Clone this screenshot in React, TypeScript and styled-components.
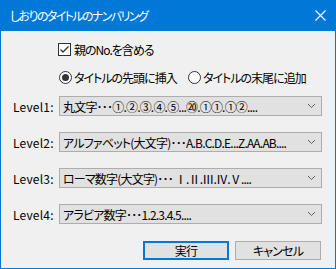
import React from "react"
import styled, { createGlobalStyle } from "styled-components"

const GlobalStyle = createGlobalStyle`
    html, body {
        margin: 0;
        padding: 0;
        background: #f0f0f0;
    }
    * {
        box-sizing: border-box;
    }
`

const Window = styled.div`
    width: 336px;
    height: 269px;
    border: 1px solid #0078d7;
    border-top: none;
    background: #f0f0f0;
    display: flex;
    flex-direction: column;
    font-family: "Noto Sans CJK JP", "Noto Sans", sans-serif;
    font-feature-settings: "palt";
    font-size: 12px;
    color: #000;
`

const TitleBar = styled.div`
    height: 31px;
    margin: 0 -1px;
    background: #0078d7;
    color: #fff;
    display: flex;
    align-items: center;
    justify-content: space-between;
    padding: 0 10px 0 10px;
    flex: 0 0 auto;
`

const TitleText = styled.div`
    font-size: 12px;
    letter-spacing: -1.6px;
    margin-top: -1px;
`

const Body = styled.div`
    flex: 1 1 auto;
    display: flex;
    flex-direction: column;
    padding: 12px 13px 0 12px;
`

const Text = styled.span`
    letter-spacing: -1px;
`

const CheckRow = styled.label`
    display: flex;
    align-items: center;
    gap: 3px;
    margin-left: 45px;
    height: 13px;
`

const CheckBox = styled.span`
    width: 13px;
    height: 13px;
    border: 1px solid #333;
    background: #fff;
    display: flex;
    align-items: center;
    justify-content: center;
`

const RadioRow = styled.div`
    display: flex;
    align-items: center;
    margin-left: 46px;
    margin-top: 15px;
    height: 13px;
`

const RadioItem = styled.label<{ $width?: number }>`
    display: flex;
    align-items: center;
    gap: 2px;
    width: ${p => (p.$width ? `${p.$width}px` : "auto")};
`

const RadioCircle = styled.span<{ $checked?: boolean }>`
    width: 13px;
    height: 13px;
    border: 1px solid #333;
    border-radius: 50%;
    background: #fff;
    display: flex;
    align-items: center;
    justify-content: center;
    &::after {
        content: "";
        width: 7px;
        height: 7px;
        border-radius: 50%;
        background: ${p => (p.$checked ? "#333" : "transparent")};
    }
`

const Levels = styled.div`
    display: flex;
    flex-direction: column;
    gap: 16px;
    margin-top: 12px;
`

const LevelRow = styled.div`
    display: flex;
    align-items: center;
    height: 20px;
`

const LevelLabel = styled.div`
    width: 46px;
    letter-spacing: 0.2px;
`

const Select = styled.div`
    flex: 1 1 auto;
    height: 20px;
    border: 1px solid #adadad;
    background: #e1e1e1;
    display: flex;
    align-items: center;
    justify-content: space-between;
    padding: 0 5px 0 3px;
    white-space: nowrap;
    overflow: hidden;
`

const SelectText = styled.span`
    letter-spacing: -0.8px;
`

const Buttons = styled.div`
    display: flex;
    justify-content: flex-end;
    gap: 6px;
    margin-top: 17px;
    margin-right: 1px;
`

const Button = styled.div<{ $primary?: boolean }>`
    width: 86px;
    height: 19px;
    background: #e1e1e1;
    border: ${p => (p.$primary ? "2px solid #0078d7" : "1px solid #adadad")};
    display: flex;
    align-items: center;
    justify-content: center;
    letter-spacing: -0.8px;
`

const Chevron = () => (
    <svg width="9" height="6" viewBox="0 0 9 6">
        <path d="M1 1 L4.5 4.5 L8 1" fill="none" stroke="#606060" strokeWidth="1" />
    </svg>
)

const levels = [
    { label: "Level1:", text: "丸文字･･･①.②.③.④.⑤...⑳.①①.①②...." },
    { label: "Level2:", text: "アルファベット(大文字)･･･A.B.C.D.E...Z.AA.AB...." },
    { label: "Level3:", text: "ローマ数字(大文字)･･･ Ⅰ.Ⅱ.Ⅲ.Ⅳ.Ⅴ...." },
    { label: "Level4:", text: "アラビア数字･･･1.2.3.4.5...." },
]

export default function App() {
    return (
        <>
            <GlobalStyle />
            <Window>
                <TitleBar>
                    <TitleText>しおりのタイトルのナンバリング</TitleText>
                    <svg width="11" height="11" viewBox="0 0 11 11">
                        <path d="M0.5 0.5 L10.5 10.5 M10.5 0.5 L0.5 10.5" stroke="#fff" strokeWidth="1.1" />
                    </svg>
                </TitleBar>
                <Body>
                    <CheckRow>
                        <CheckBox>
                            <svg width="11" height="11" viewBox="0 0 11 11">
                                <path d="M1.5 5.5 L4 8 L9.5 2.5" fill="none" stroke="#333" strokeWidth="1.3" />
                            </svg>
                        </CheckBox>
                        <Text>親のNo.を含める</Text>
                    </CheckRow>
                    <RadioRow>
                        <RadioItem $width={129}>
                            <RadioCircle $checked />
                            <Text>タイトルの先頭に挿入</Text>
                        </RadioItem>
                        <RadioItem>
                            <RadioCircle />
                            <Text>タイトルの末尾に追加</Text>
                        </RadioItem>
                    </RadioRow>
                    <Levels>
                        {levels.map(l => (
                            <LevelRow key={l.label}>
                                <LevelLabel>{l.label}</LevelLabel>
                                <Select>
                                    <SelectText>{l.text}</SelectText>
                                    <Chevron />
                                </Select>
                            </LevelRow>
                        ))}
                    </Levels>
                    <Buttons>
                        <Button $primary>実行</Button>
                        <Button>キャンセル</Button>
                    </Buttons>
                </Body>
            </Window>
        </>
    )
}
